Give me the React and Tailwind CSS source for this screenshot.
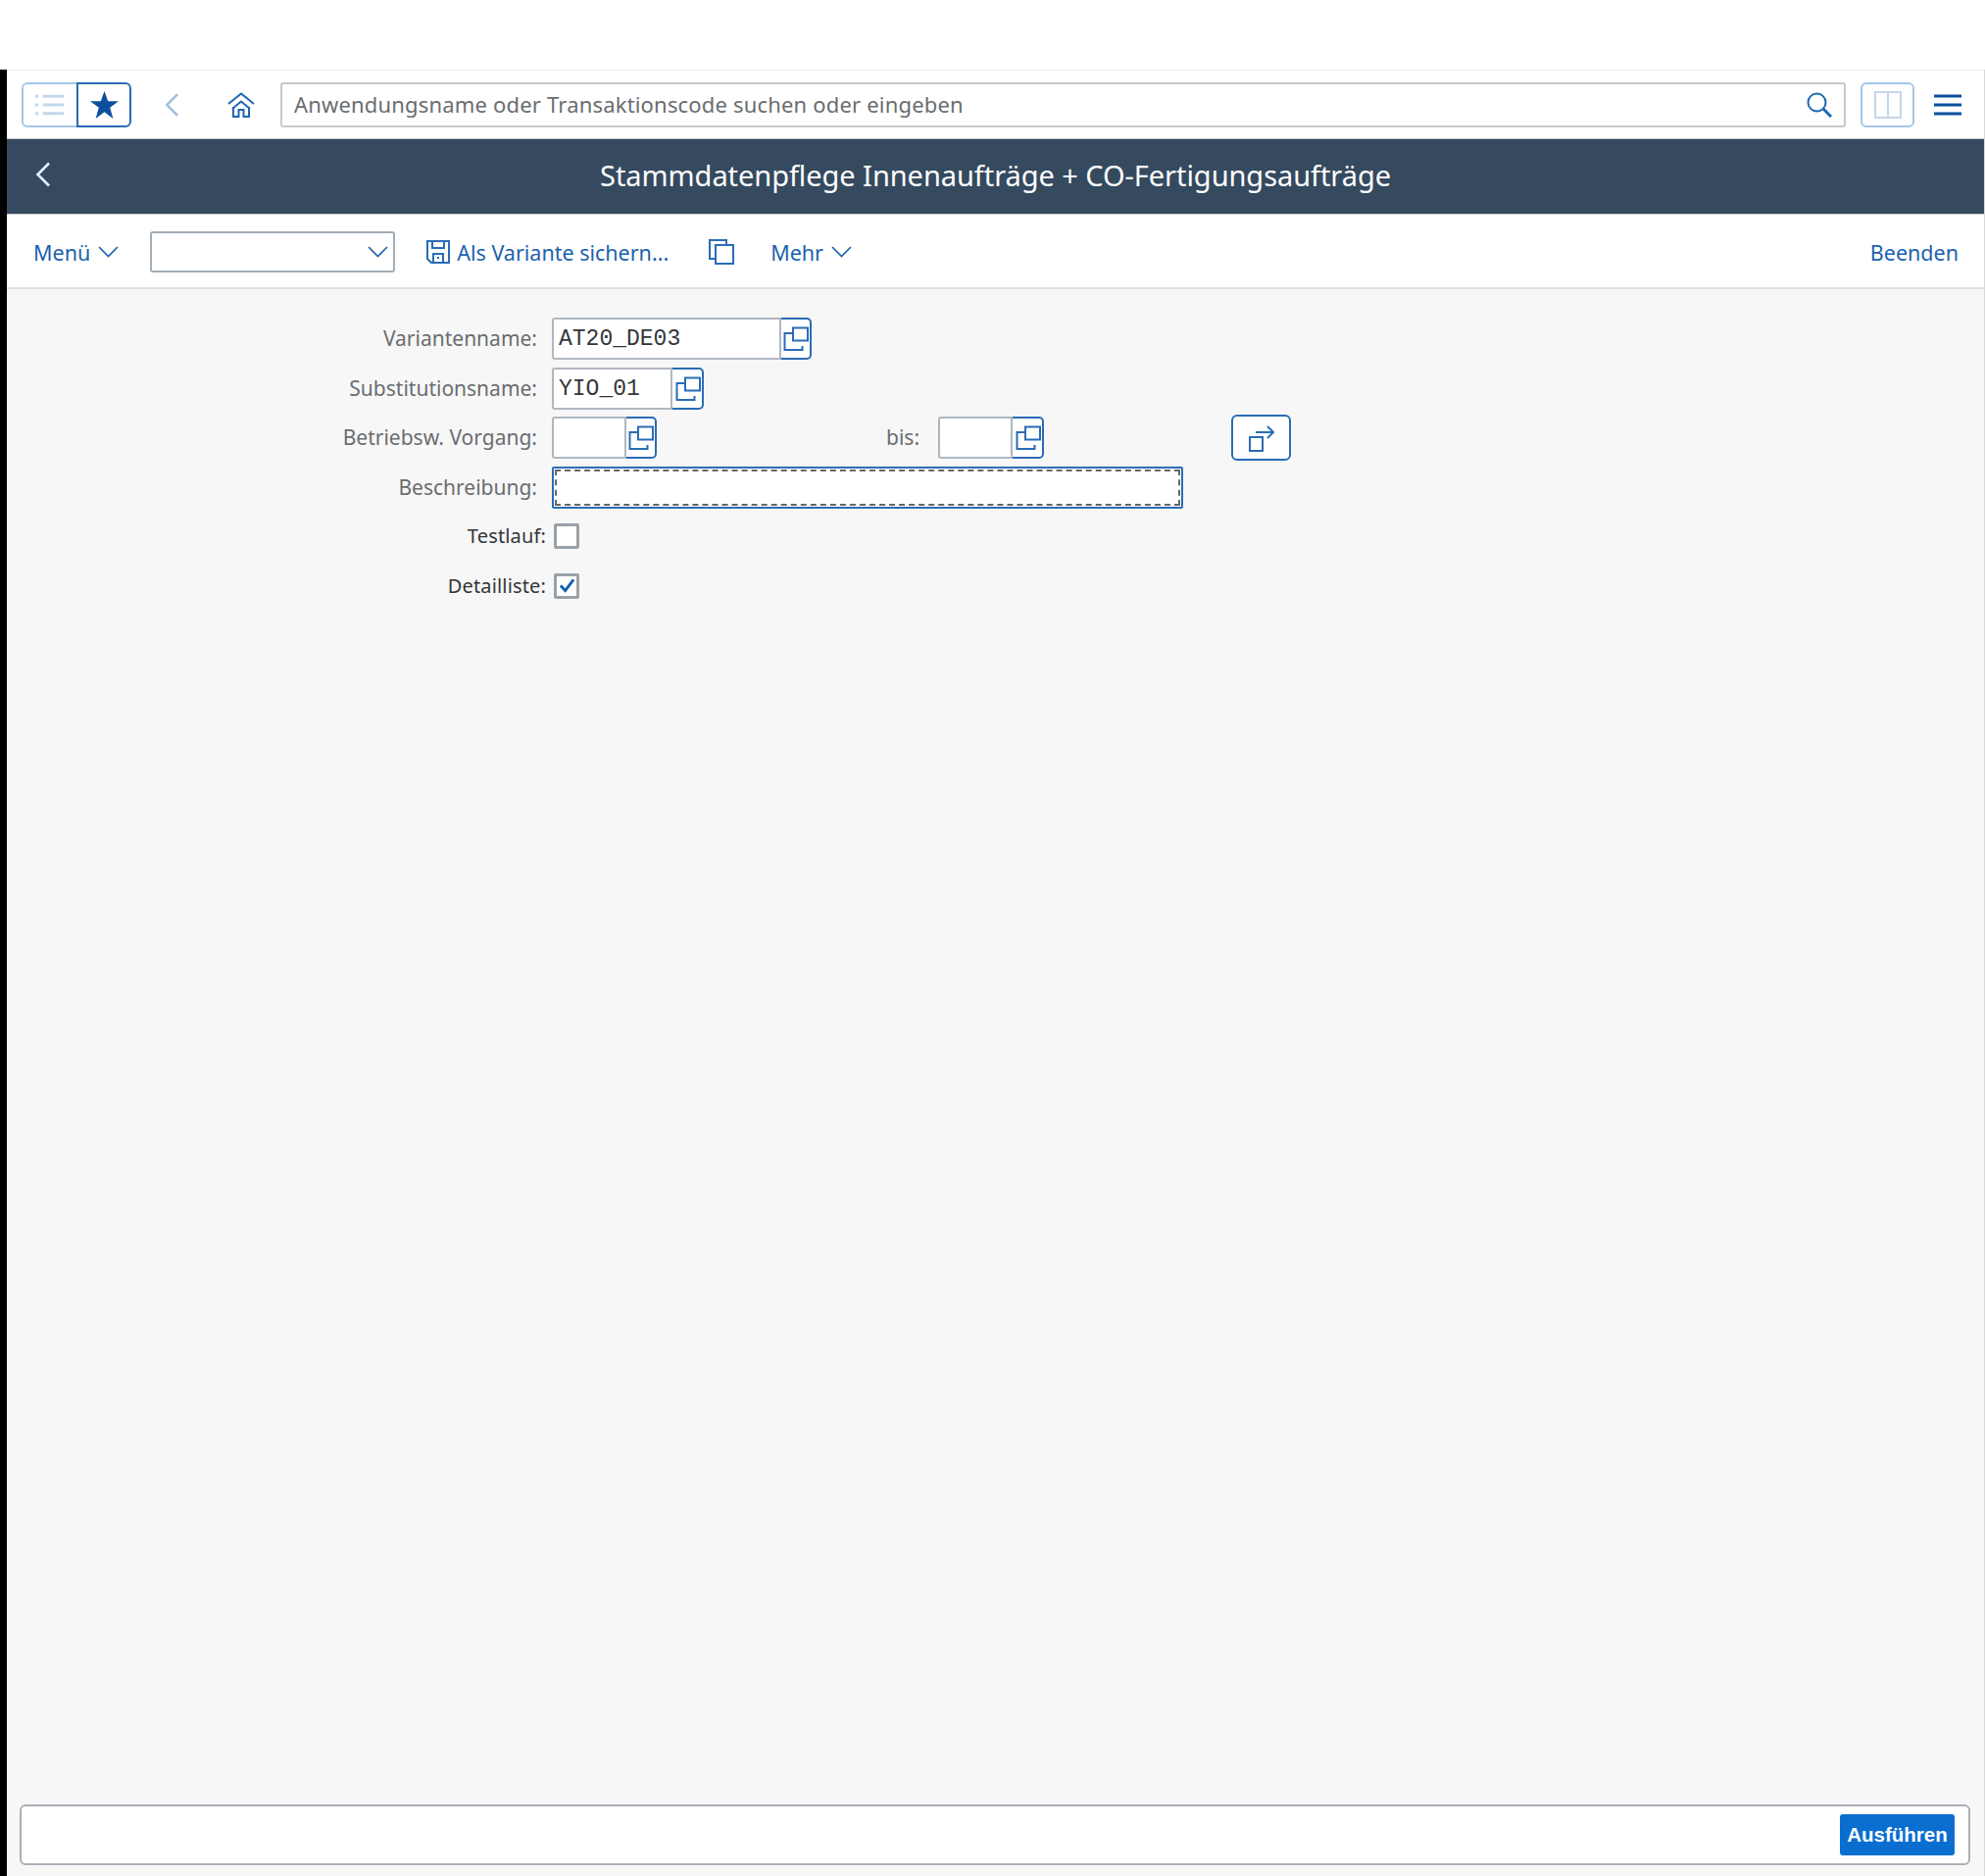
import React from 'react';

const Chevron = ({ className }) => (
  <svg viewBox="0 0 21 12" className={className} fill="none" stroke="currentColor" strokeWidth="1.6">
    <path d="M1 1l9.5 9.5L20 1" />
  </svg>
);

const ValueHelpIcon = () => (
  <svg viewBox="0 0 27 26" className="w-[27px] h-[26px]" fill="none" stroke="#2a6cb5" strokeWidth="2">
    <path d="M10 7H1.5v17h18v-4" />
    <rect x="10" y="1.5" width="15" height="13" />
  </svg>
);

// input field with the value help button glued to its right side
const HelpField = ({ inputWidth, btnWidth, value }) => (
  <div className="flex h-[43px]">
    <div
      className={`${inputWidth} h-full bg-white border-2 border-[#b0b7bf] rounded-l-[3px] pl-[5px] pt-[2px] flex items-center text-[23px] text-[#32363a] leading-none`}
      style={{ fontFamily: '"Liberation Mono", monospace' }}
    >
      {value}
    </div>
    <div className={`${btnWidth} h-full bg-white border-2 border-l-0 border-[#2a6cb5] rounded-r-[5px] flex items-center justify-end`}>
      <ValueHelpIcon />
    </div>
  </div>
);

const Label = ({ children }) => (
  <div className="w-[556px] shrink-0 pr-[15px] text-right text-[21px] text-[#6a6d70] leading-none">{children}</div>
);

const CheckRow = ({ label, checked }) => (
  <div className="flex items-center h-[25px]">
    <div className="w-[558px] shrink-0 pr-[8px] text-right text-[20px] tracking-[0.15px] text-[#32363a] leading-none">{label}</div>
    <div className="w-[26px] h-[26px] bg-white border-[3px] border-[#9aa1a9] rounded-[2px] flex items-center justify-center">
      {checked && (
        <svg viewBox="0 0 18 16" className="w-[17px] h-[15px]" fill="none" stroke="#0a5eb0" strokeWidth="3">
          <path d="M2 8l5 5.5L16 1.5" />
        </svg>
      )}
    </div>
  </div>
);

export default function App() {
  return (
    <div
      className="w-[2025px] h-[1914px] flex flex-col bg-white overflow-hidden"
      style={{ fontFamily: '"Noto Sans", sans-serif' }}
    >
      <div className="h-[71px] shrink-0" />

      <div className="flex-1 flex min-h-0">
        {/* black strip on the left */}
        <div className="w-[7px] shrink-0 bg-black" />

        <div className="flex-1 flex flex-col min-w-0 border-r border-[#d9d9d9]">
          {/* Shell header */}
          <div className="h-[70px] shrink-0 border-t border-[#ececec] flex items-center pl-[15px] pr-[22px]">
            <div className="flex h-[46px] w-[112px]">
              <div className="w-[56px] border-2 border-[#a5c5e6] border-r-0 rounded-l-[6px] flex items-center justify-center pr-[2px]">
                <svg viewBox="0 0 30 24" className="w-[29px] h-[24px]" stroke="#c3d6ea" strokeWidth="3">
                  <path d="M8 3h22M8 12h22M8 21h22M0 3h3M0 12h3M0 21h3" />
                </svg>
              </div>
              <div className="flex-1 border-2 border-[#2a6cb5] rounded-r-[6px] flex items-center justify-center">
                <svg viewBox="0 0 30 29" className="w-[29px] h-[28px]" fill="#0a4f9e">
                  <path d="M15 0l3.8 10.6H30l-9.1 6.7L24.2 29 15 21.9 5.8 29l3.3-11.7L0 10.6h11.2z" />
                </svg>
              </div>
            </div>
            <svg viewBox="0 0 16 26" className="w-[15px] h-[26px] ml-[34px]" fill="none" stroke="#9dbcdd" strokeWidth="2.6">
              <path d="M14 1.5L2.5 13 14 24.5" />
            </svg>
            <svg viewBox="0 0 28 26" className="w-[28px] h-[26px] ml-[49px]" fill="none" stroke="#1e66b4" strokeWidth="2">
              <path d="M1 12L14 1.5 27 12M5 17l9-7.5 9 7.5M6 15v10h5.5v-7h5v7H22V15" />
            </svg>
            <div className="ml-[26px] w-[1597px] h-[46px] bg-white border-2 border-[#c9c9c9] rounded-[3px] flex items-center justify-between pl-[12px] pr-[12px]">
              <span className="text-[22px] tracking-[0.18px] text-[#6a6d70] leading-none pb-[1px]">Anwendungsname oder Transaktionscode suchen oder eingeben</span>
              <svg viewBox="0 0 26 26" className="w-[26px] h-[26px]" fill="none" stroke="#1e66b4" strokeWidth="2">
                <circle cx="10.5" cy="10.5" r="9" />
                <path d="M17 17l8 8" strokeWidth="3" />
              </svg>
            </div>
            <div className="ml-[15px] w-[55px] h-[46px] border-2 border-[#a5c5e6] rounded-[6px] flex items-center justify-center">
              <svg viewBox="0 0 28 28" className="w-[28px] h-[28px]" fill="none" stroke="#c3d6ea" strokeWidth="2">
                <path d="M1 1h26v26H1zM14 1v26" />
              </svg>
            </div>
            <svg viewBox="0 0 28 22" className="w-[28px] h-[22px] ml-[20px]" stroke="#0a4f9e" strokeWidth="3">
              <path d="M0 2h28M0 11h28M0 20h28" />
            </svg>
          </div>

          {/* Title bar */}
          <div className="relative h-[78px] shrink-0 bg-[#354a5f] border-y border-[#c9c9c9] flex items-center justify-center">
            <svg viewBox="0 0 16 26" className="absolute left-[29px] top-[23px] w-[16px] h-[26px]" fill="none" stroke="#e4eefa" strokeWidth="2.6">
              <path d="M14 1.5L2.5 13 14 24.5" />
            </svg>
            <span className="text-[29px] tracking-[-0.06px] text-white leading-none pb-[3px]">Stammdatenpflege Innenaufträge + CO-Fertigungsaufträge</span>
          </div>

          {/* Toolbar */}
          <div className="h-[76px] shrink-0 border-b-2 border-[#e0e0e0] flex items-center pl-[27px] pr-[26px] text-[21.5px] text-[#1c62ad] leading-none">
            <span className="pt-[3px]">Menü</span>
            <Chevron className="w-[21px] h-[12px] ml-[8px] mt-[2px]" />
            <div className="ml-[32px] w-[250px] h-[42px] bg-white border-2 border-[#a3adb8] rounded-[3px] flex items-center justify-end pr-[5px] mt-[1px]">
              <Chevron className="w-[21px] h-[12px]" />
            </div>
            <svg viewBox="0 0 24 24" className="w-[24px] h-[24px] ml-[32px] mt-[2px]" fill="none" stroke="#2a6cb5" strokeWidth="2">
              <path d="M1 1h22v22H5l-4-4zM6 1v7h12V1M7 23v-9h10v9M11 18h2" />
            </svg>
            <span className="ml-[7px] pt-[3px]">Als Variante sichern...</span>
            <svg viewBox="0 0 26 26" className="w-[26px] h-[26px] ml-[41px] mt-[1px]" fill="none" stroke="#2a6cb5" strokeWidth="2">
              <path d="M6 20H1V1h17v4" />
              <rect x="7" y="6" width="18" height="19" />
            </svg>
            <span className="ml-[37px] pt-[3px]">Mehr</span>
            <Chevron className="w-[21px] h-[12px] ml-[8px] mt-[2px]" />
            <span className="ml-auto pt-[3px]">Beenden</span>
          </div>

          {/* Form + bottom bar */}
          <div className="flex-1 flex flex-col bg-[#f7f7f7] min-h-0">
            <div className="flex-1 pt-[29px] flex flex-col">
              <div className="flex items-center h-[43px]">
                <Label>Variantenname:</Label>
                <HelpField inputWidth="w-[234px]" btnWidth="w-[31px]" value="AT20_DE03" />
              </div>
              <div className="flex items-center h-[43px] mt-[8px]">
                <Label>Substitutionsname:</Label>
                <HelpField inputWidth="w-[123px]" btnWidth="w-[32px]" value="YIO_01" />
              </div>
              <div className="flex items-center h-[43px] mt-[7px]">
                <Label>Betriebsw. Vorgang:</Label>
                <HelpField inputWidth="w-[76px]" btnWidth="w-[31px]" value="" />
                <span className="ml-[234px] mr-[19px] text-[21px] text-[#6a6d70] leading-none">bis:</span>
                <HelpField inputWidth="w-[76px]" btnWidth="w-[32px]" value="" />
                <div className="ml-[191px] w-[61px] h-[47px] bg-white border-2 border-[#2a6cb5] rounded-[6px] flex items-center justify-center">
                  <svg viewBox="0 0 28 28" className="w-[28px] h-[28px]" fill="none" stroke="#2a6cb5" strokeWidth="2">
                    <rect x="2" y="13" width="13" height="14" />
                    <path d="M8 8h18M20 2l6 6-6 6" />
                  </svg>
                </div>
              </div>
              <div className="flex items-center h-[43px] mt-[8px]">
                <Label>Beschreibung:</Label>
                <div className="w-[644px] h-[43px] bg-white border-2 border-[#2a6cb5] rounded-[2px] p-[1px]">
                  <div className="w-full h-full border-2 border-dashed border-[#666]" />
                </div>
              </div>
              <div className="flex flex-col gap-[26px] mt-[15px]">
                <CheckRow label="Testlauf:" />
                <CheckRow label="Detailliste:" checked />
              </div>
            </div>

            {/* Bottom bar */}
            <div className="h-[62px] shrink-0 mb-[11px] ml-[13px] mr-[14px] bg-white border-2 border-[#a9b0b8] rounded-[6px] flex items-center justify-end pr-[14px]">
              <button className="w-[117px] h-[42px] bg-[#0a6ed1] rounded-[3px] text-white text-[20.5px] font-bold leading-none" style={{ fontFamily: '"Liberation Sans", sans-serif' }}>
                Ausführen
              </button>
            </div>
          </div>
        </div>
      </div>
    </div>
  );
}
